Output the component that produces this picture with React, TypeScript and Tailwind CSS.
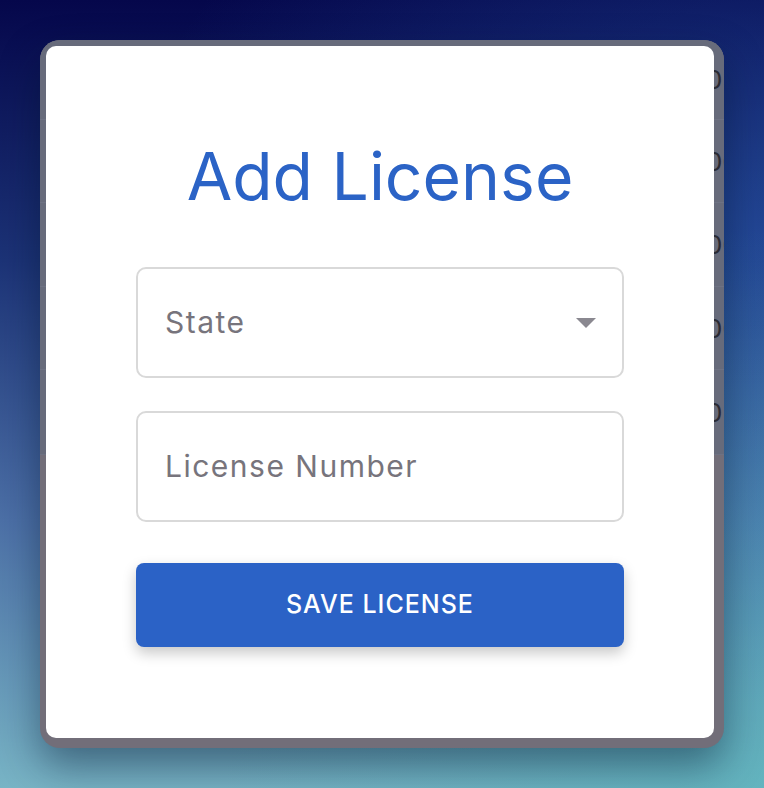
import React from "react";

const rows = [
  { text: "0:30", h: "h-[80px]" },
  { text: "00", h: "h-[83px]" },
  { text: "00", h: "h-[84px]" },
  { text: "00", h: "h-[83px]" },
  { text: "0:15", h: "h-[85px]" },
];

export default function App() {
  return (
    <div
      className="w-[764px] h-[788px] overflow-hidden bg-[radial-gradient(ellipse_at_100%_100%,rgba(85,180,186,0.6),transparent_50%),radial-gradient(ellipse_at_100%_30%,rgba(45,100,190,0.45),transparent_60%),linear-gradient(180deg,#05074b_0%,#1c3377_33%,#4c70a7_66%,#78b4c5_100%)] pt-10 pl-10"
      style={{ fontFamily: "Inter, 'Noto Sans', sans-serif" }}
    >
      {/* page behind the dialog, dimmed by the backdrop */}
      <div className="relative w-[684px] h-[708px] rounded-[20px] overflow-hidden bg-[#726e79] shadow-[0_18px_40px_rgba(0,20,45,0.45)]">
        <div className="flex flex-col h-[415px] bg-[#676b7b]">
          {rows.map((r, i) => (
            <div
              key={i}
              className={`${r.h} flex items-center border-b border-[#6e7283] pl-[666px] text-[26px] text-[#2a2a33] whitespace-nowrap`}
            >
              {r.text}
            </div>
          ))}
        </div>

        {/* dialog */}
        <div className="absolute left-[6px] top-[6px] w-[668px] h-[692px] bg-white rounded-[10px] flex flex-col items-center pt-[97px]">
          <h1 className="text-[66px] leading-none text-[#2b63c6] font-normal">Add License</h1>

          <div className="mt-[58px] w-[488px] flex flex-col gap-[33px]">
            <div className="h-[111px] rounded-[10px] border-2 border-[#d9d9d9] flex items-center justify-between pl-[27px] pr-[26px]">
              <span className="text-[30px] tracking-[0.05em] text-[#77747c]">State</span>
              <svg width="20" height="10" viewBox="0 0 20 10">
                <path d="M0 0 L20 0 L10 10 Z" fill="#8a8890" />
              </svg>
            </div>

            <div className="h-[111px] rounded-[10px] border-2 border-[#d9d9d9] flex items-center pl-[27px]">
              <span className="text-[30px] tracking-[0.05em] text-[#77747c]">License Number</span>
            </div>
          </div>

          <button className="mt-[41px] w-[488px] h-[84px] rounded-[8px] bg-[#2b62c6] text-white text-[25px] font-medium tracking-[0.04em] shadow-[0_6px_14px_rgba(0,0,0,0.22)]">
            SAVE LICENSE
          </button>
        </div>
      </div>
    </div>
  );
}
